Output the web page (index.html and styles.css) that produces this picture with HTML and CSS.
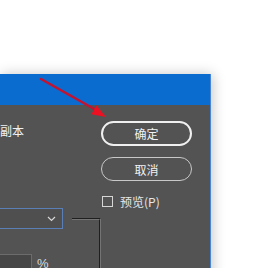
FILE: index.html
```html
<!DOCTYPE html>
<html lang="zh-CN">

<head>
    <meta charset="UTF-8">
    <title>复制图层</title>
    <link rel="stylesheet" href="styles.css">
</head>

<body>
    <div class="stage">
        <div class="dialog">
            <div class="titlebar"></div>
            <div class="content">
                <div class="main">
                    <div class="name-row">副本</div>
                    <fieldset class="group">
                        <legend class="group-legend">
                            <div class="select">
                                <svg class="chevron" width="9" height="6" viewBox="0 0 9 6">
                                    <path d="M1 1 L4.5 4.5 L8 1" fill="none" stroke="#d8d8d8" stroke-width="1.2"/>
                                </svg>
                            </div>
                        </legend>
                        <div class="field-row">
                            <div class="input"></div>
                            <span class="unit">%</span>
                        </div>
                    </fieldset>
                </div>
                <div class="actions">
                    <button class="btn btn-ok">确定</button>
                    <button class="btn btn-cancel">取消</button>
                    <label class="preview"><span class="checkbox"></span>预览(<u>P</u>)</label>
                </div>
            </div>
        </div>

        <svg class="arrow" width="255" height="268" viewBox="0 0 255 268">
            <line x1="41" y1="79" x2="96" y2="110" stroke="#c4122f" stroke-width="2.5" stroke-linecap="round"/>
            <polygon points="106,117 91.4,114.2 96.4,105.6" fill="#ec1022"/>
        </svg>
    </div>
</body>

</html>
```

FILE: styles.css
```css
body {
    margin: 0;
    background-color: white;
    font-family: 'Noto Sans CJK SC', 'Noto Sans', sans-serif;
    overflow: hidden;
}

.stage {
    position: relative;
    width: 255px;
    height: 268px;
    padding-top: 74px;
    box-sizing: border-box;
    overflow: hidden;
}

.dialog {
    width: 211px;
    height: 220px;
    box-sizing: border-box;
    border-right: 1px solid #4a86d4;
    background-color: #535353;
    box-shadow: 2px 0 12px rgba(0, 0, 0, 0.22);
}

.titlebar {
    height: 31px;
    background-color: #0b6ccf;
}

.content {
    display: flex;
    color: #f2f2f2;
    font-size: 12px;
}

.main {
    width: 101px;
}

.name-row {
    margin-top: 16px;
    height: 20px;
    line-height: 20px;
}

.group {
    width: 101px;
    box-sizing: border-box;
    margin: 67px 0 0 0;
    padding: 0;
    border: 2px groove #747474;
    border-left: none;
    border-bottom: none;
    min-width: 0;
}

.group-legend {
    padding: 0 9px 0 0;
    margin: 0;
}

.select {
    width: 63px;
    height: 21px;
    box-sizing: border-box;
    border: 1px solid #5a7fb6;
    border-left: none;
    background-color: #4f4f4f;
    display: flex;
    align-items: center;
    justify-content: flex-end;
    padding-right: 6px;
}

.field-row {
    display: flex;
    align-items: flex-start;
    margin-top: 25px;
}

.input {
    width: 32px;
    height: 20px;
    box-sizing: border-box;
    border: 1px solid #6c6c6c;
    border-left: none;
    background-color: #464646;
}

.unit {
    margin: 3px 0 0 5px;
    font-family: 'Liberation Sans', sans-serif;
    font-size: 13px;
    color: #dcdcdc;
    line-height: 14px;
}

.actions {
    width: 91px;
    display: flex;
    flex-direction: column;
}

.btn {
    height: 25px;
    border-radius: 13px;
    background-color: transparent;
    color: #f2f2f2;
    font-family: inherit;
    font-size: 12px;
    padding: 0;
}

.btn-ok {
    margin-top: 16px;
    border: 2px solid #f0f0f0;
}

.btn-cancel {
    margin-top: 11px;
    height: 24px;
    border: 1px solid #c8c8c8;
}

.preview {
    display: flex;
    align-items: center;
    margin-top: 14px;
    height: 13px;
    color: #e6e6e6;
}

.preview u {
    text-decoration: none;
}

.checkbox {
    width: 11px;
    height: 11px;
    box-sizing: border-box;
    border: 1px solid #d6d6d6;
    margin: 0 7px 0 1px;
}

.arrow {
    position: absolute;
    left: 0;
    top: 0;
    pointer-events: none;
}
```
